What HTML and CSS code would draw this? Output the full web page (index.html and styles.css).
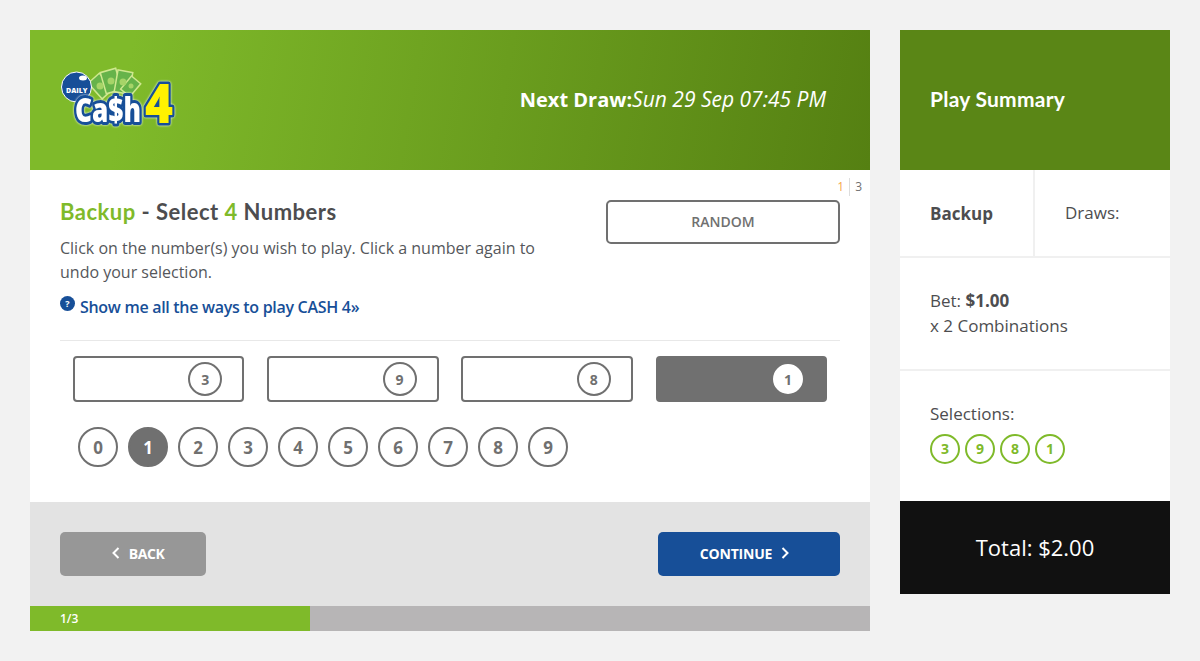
FILE: index.html
```html
<!DOCTYPE html>
<html lang="en">
<head>
<meta charset="utf-8">
<title>Cash 4</title>
<link rel="stylesheet" href="styles.css">
</head>
<body>
<div class="page">
  <main class="main">
    <header class="hero">
      <svg class="logo" width="118" height="64" viewBox="0 0 118 64" aria-label="Daily Cash 4">
        <g class="bill">
          <rect x="33" y="9" width="15" height="21" transform="rotate(-42 40 19)"/>
          <rect x="43" y="3" width="16" height="22" transform="rotate(-16 51 14)"/>
          <rect x="56" y="4" width="15" height="22" transform="rotate(10 63 15)"/>
          <rect x="65" y="11" width="12" height="17" transform="rotate(40 71 19)"/>
        </g>
        <g class="bill-mark">
          <circle cx="40" cy="19" r="3.500"/>
          <circle cx="51" cy="14" r="3.500"/>
          <circle cx="63" cy="15" r="3.500"/>
          <circle cx="71" cy="19" r="2.500"/>
        </g>
        <circle cx="16.500" cy="20" r="15" fill="#174f98" stroke="#fff" stroke-width="1"/>
        <ellipse cx="23" cy="11" rx="4" ry="2.500" fill="#fff"/>
        <text x="6" y="26" class="logo-daily">DAILY</text>
        <text x="15" y="55" class="logo-cash" textLength="66" lengthAdjust="spacingAndGlyphs">Ca$h</text>
        <text x="85" y="56" class="logo-four" textLength="28" lengthAdjust="spacingAndGlyphs">4</text>
      </svg>
      <p class="draw"><b>Next Draw:</b><i>Sun 29 Sep 07:45 PM</i></p>
    </header>
    <section class="card">
      <div class="steps"><span class="step-now">1</span><span class="step-all">3</span></div>
      <div class="intro">
        <div class="intro-text">
          <h1 class="title"><span class="green">Backup</span> - Select <span class="green">4</span> Numbers</h1>
          <p class="help">Click on the number(s) you wish to play. Click a number again to undo your selection.</p>
          <p class="ways"><span class="q">?</span><a href="#">Show me all the ways to play CASH 4»</a></p>
        </div>
        <button class="random">RANDOM</button>
      </div>
      <div class="slots">
        <div class="slot"><span class="slot-num">3</span></div>
        <div class="slot"><span class="slot-num">9</span></div>
        <div class="slot"><span class="slot-num">8</span></div>
        <div class="slot slot-active"><span class="slot-num">1</span></div>
      </div>
      <div class="balls">
        <span class="ball">0</span>
        <span class="ball ball-on">1</span>
        <span class="ball">2</span>
        <span class="ball">3</span>
        <span class="ball">4</span>
        <span class="ball">5</span>
        <span class="ball">6</span>
        <span class="ball">7</span>
        <span class="ball">8</span>
        <span class="ball">9</span>
      </div>
    </section>
    <footer class="actions">
      <button class="btn btn-back"><svg width="8" height="12" viewBox="0 0 8 12"><path d="M6.500 1 1.500 6l5 5" fill="none" stroke="#fff" stroke-width="2"/></svg>BACK</button>
      <button class="btn btn-next">CONTINUE<svg width="8" height="12" viewBox="0 0 8 12"><path d="M1.500 1l5 5-5 5" fill="none" stroke="#fff" stroke-width="2"/></svg></button>
    </footer>
    <div class="progress"><div class="progress-fill">1/3</div></div>
  </main>
  <aside class="side">
    <h2 class="side-head">Play Summary</h2>
    <div class="side-row">
      <div class="side-game">Backup</div>
      <div class="side-draws">Draws:</div>
    </div>
    <div class="side-bet">Bet: <b>$1.00</b><br>x 2 Combinations</div>
    <div class="side-sel">
      <div>Selections:</div>
      <div class="picks">
        <span class="pick">3</span><span class="pick">9</span><span class="pick">8</span><span class="pick">1</span>
      </div>
    </div>
    <div class="total">Total: $2.00</div>
  </aside>
</div>
</body>
</html>
```
FILE: styles.css
```css
* { box-sizing: border-box; }
html, body { margin: 0; height: 100%; }
body {
  background: #f2f2f2;
  font-family: "Open Sans", "Liberation Sans", sans-serif;
  color: #4d4d4f;
  overflow: hidden;
}
p, h1, h2 { margin: 0; }
button { font-family: inherit; cursor: pointer; }

.page { display: flex; gap: 30px; padding: 30px; align-items: flex-start; }
.main { width: 840px; flex: none; }
.side { width: 270px; flex: none; background: #fff; }

.hero {
  height: 140px;
  background: linear-gradient(100deg, #7fba2a 12%, #558012 100%);
  display: flex;
  align-items: center;
  justify-content: space-between;
  padding: 0 44px 0 30px;
}
.logo { display: block; margin-top: -3px; overflow: visible; }
.bill rect { fill: #66b34a; stroke: #cfe88f; stroke-width: 1.500px; }
.bill-mark circle { fill: #a6d468; }
.logo-daily { font: 800 7px "Open Sans", sans-serif; fill: #fff; }
.logo-cash {
  font: 800 33px "Open Sans", sans-serif;
  fill: #fff;
  stroke: #174f98;
  stroke-width: 6px;
  stroke-linejoin: round;
  paint-order: stroke fill;
  filter: drop-shadow(0 0 1px #fff);
}
.logo-four {
  font: 800 54px "Open Sans", sans-serif;
  fill: #fff200;
  stroke: #174f98;
  stroke-width: 5px;
  stroke-linejoin: round;
  paint-order: stroke fill;
  filter: drop-shadow(0 0 1px #fff);
}
.draw { color: #fff; font-size: 21px; line-height: 26px; margin: 0 0 2px; }
.draw b { font-size: 20px; font-weight: 700; }
.draw i { font-style: italic; }

.card { position: relative; height: 332px; background: #fff; padding: 30px 30px 0; }
.steps { position: absolute; top: 8px; right: 8px; display: flex; font-size: 12px; line-height: 18px; }
.step-now { color: #f5a94d; padding-right: 5px; border-right: 1px solid #ddd; }
.step-all { color: #707070; padding-left: 5px; }

.intro { display: flex; justify-content: space-between; align-items: flex-start; height: 141px; border-bottom: 1px solid #e8e8e8; }
.intro-text { width: 490px; }
.title { font: 700 22px/24px "Lato", "Open Sans", sans-serif; letter-spacing: .48px; color: #4d4d4f; }
.green { color: #7fba2a; }
.help { font-size: 16px; line-height: 24px; margin-top: 12px; color: #55575b; }
.ways { display: flex; align-items: flex-start; margin-top: 11px; line-height: 24px; }
.ways a { color: #174f98; font-size: 16px; font-weight: 600; text-decoration: none; letter-spacing: -.3px; margin-left: 5px; }
.q { width: 15px; height: 15px; border-radius: 50%; background: #174f98; color: #fff; font-size: 9px; font-weight: 700; line-height: 15px; text-align: center; margin-top: 1px; }
.random {
  width: 234px;
  height: 44px;
  border: 2px solid #707070;
  border-radius: 5px;
  background: #fff;
  color: #707070;
  font-size: 14px;
  font-weight: 600;
  padding: 0 0 2px;
}

.slots { display: grid; grid-template-columns: repeat(4, 1fr); gap: 22.900px; padding: 15px 13px 0; }
.slot {
  height: 46px;
  border: 2px solid #707070;
  border-radius: 4px;
  display: flex;
  align-items: center;
  justify-content: flex-end;
  padding-right: 20px;
}
.slot-num {
  width: 34px;
  height: 34px;
  border: 2px solid #707070;
  border-radius: 50%;
  display: flex;
  align-items: center;
  justify-content: center;
  font-size: 14px;
  font-weight: 700;
  color: #707070;
}
.slot-active { background: #707070; }
.slot-active .slot-num { width: 30px; height: 30px; background: #fff; border-color: #fff; margin-right: 2px; }

.balls { display: flex; gap: 10px; padding: 25px 18px 0; }
.ball {
  width: 40px;
  height: 40px;
  border: 2px solid #707070;
  border-radius: 50%;
  display: flex;
  align-items: center;
  justify-content: center;
  font-size: 17px;
  font-weight: 700;
  color: #707070;
}
.ball-on { background: #707070; color: #fff; }

.actions { height: 104px; background: #e3e3e3; display: flex; justify-content: space-between; align-items: center; padding: 0 30px; }
.btn {
  height: 44px;
  border: 0;
  border-radius: 5px;
  color: #fff;
  font-size: 14px;
  font-weight: 700;
  letter-spacing: -.2px;
  display: flex;
  align-items: center;
  justify-content: center;
  gap: 9px;
  padding-top: 0;
  padding-bottom: 2px;
}
.btn-back { width: 146px; background: #979797; padding-left: 10px; padding-right: 0; letter-spacing: -.4px; }
.btn-next { width: 182px; background: #174f98; padding-left: 0; padding-right: 9px; }

.progress { height: 25px; background: #b7b5b6; }
.progress-fill { width: 280px; height: 25px; background: #7fba2a; color: #fff; font-size: 12px; font-weight: 600; line-height: 25px; padding-left: 30px; }

.side-head { height: 140px; background: #5a8616; color: #fff; font: 700 21px/138px "Lato", "Open Sans", sans-serif; letter-spacing: .25px; padding-left: 30px; }
.side-row { display: flex; height: 88px; border-bottom: 2px solid #f0f0f0; font-size: 17px; line-height: 86px; }
.side-game { width: 135px; flex: none; padding: 1px 0 0 30px; font-weight: 700; border-right: 2px solid #f0f0f0; }
.side-draws { padding-left: 30px; }
.side-bet { height: 113px; border-bottom: 2px solid #f0f0f0; padding: 30px 30px 0; font-size: 17px; line-height: 25px; }
.side-sel { height: 130px; padding: 31px 30px 0; font-size: 17px; line-height: 24px; }
.picks { display: flex; gap: 5px; margin-top: 8px; }
.pick {
  width: 30px;
  height: 30px;
  border: 2px solid #7fba2a;
  border-radius: 50%;
  display: flex;
  align-items: center;
  justify-content: center;
  color: #7fba2a;
  font-size: 14px;
  font-weight: 700;
}
.total { height: 93px; background: #111; color: #fff; font-size: 22px; display: flex; align-items: center; justify-content: center; padding-bottom: 2px; }
```
